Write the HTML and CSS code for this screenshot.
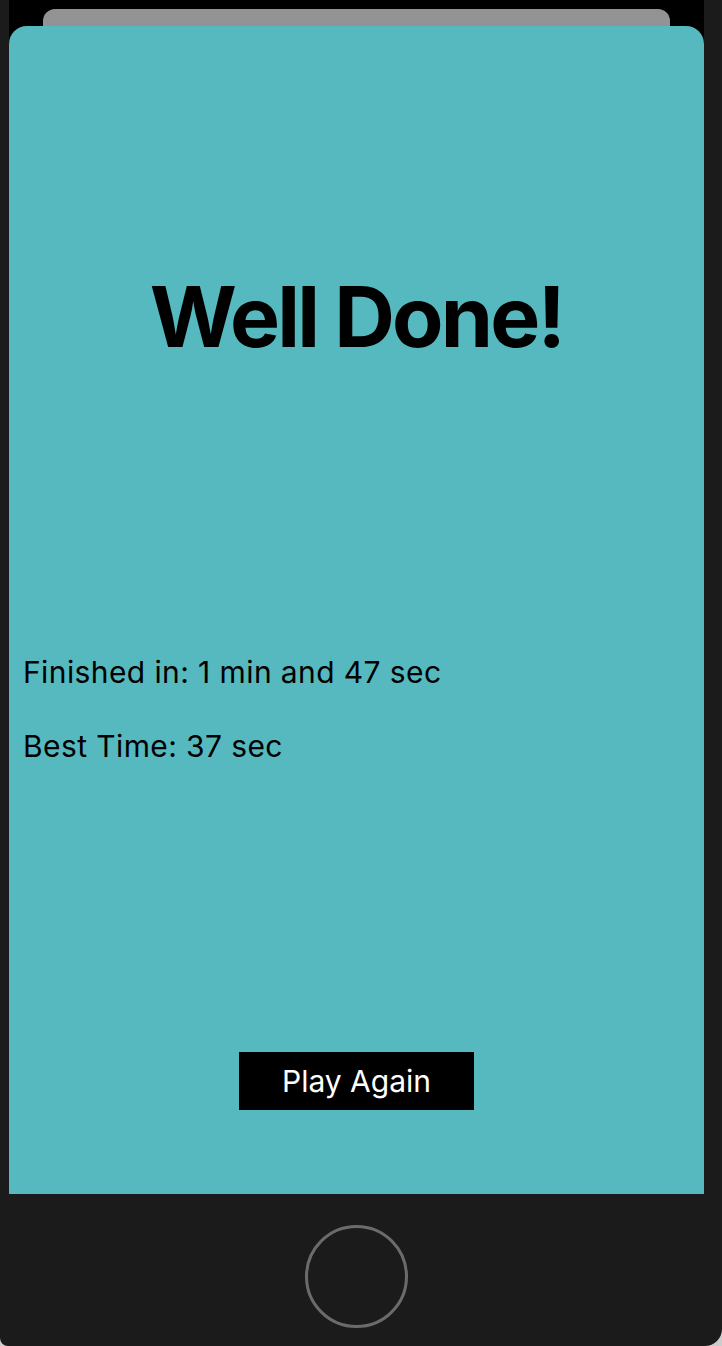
FILE: index.html
```html
<!DOCTYPE html>
<html lang="en">
<head>
<meta charset="utf-8">
<title>Well Done</title>
<link rel="stylesheet" href="styles.css">
</head>
<body>
<div class="phone">
  <div class="screen">
    <div class="sheet-back"></div>
    <div class="card">
      <h1 class="title">Well Done!</h1>
      <div class="stats">
        <p class="stat">Finished in: 1 min and 47 sec</p>
        <p class="stat">Best Time: 37 sec</p>
      </div>
      <div class="actions">
        <button class="play-btn" type="button">Play Again</button>
      </div>
    </div>
  </div>
  <div class="bezel">
    <div class="home-btn"></div>
  </div>
</div>
</body>
</html>
```

FILE: styles.css
```css
html, body {
  margin: 0;
  padding: 0;
}
body {
  background: #cdcdcd;
  width: 722px;
  height: 1346px;
  overflow: hidden;
  font-family: "Inter", "Roboto", "Liberation Sans", sans-serif;
}
.phone {
  width: 722px;
  height: 1346px;
  background: #1b1b1b;
  border-radius: 0 0 17px 8px;
  display: flex;
  flex-direction: column;
  box-sizing: border-box;
  padding-left: 9px;
  padding-right: 18px;
}
.screen {
  background: #000;
  padding-top: 9px;
  display: flex;
  flex-direction: column;
}
.sheet-back {
  height: 17px;
  margin: 0 34px;
  background: #939393;
  border-radius: 12px 12px 0 0;
}
.card {
  height: 1168px;
  background: #55b9bf;
  border-radius: 18px 18px 0 0;
  display: flex;
  flex-direction: column;
  box-sizing: border-box;
  padding-top: 241px;
}
.title {
  margin: 0;
  font-size: 84px;
  line-height: 100px;
  font-weight: 700;
  text-align: center;
  color: #000;
  letter-spacing: -2.8px;
}
.stats {
  margin-top: 287px;
  padding-left: 14px;
  display: flex;
  flex-direction: column;
  gap: 38px;
}
.stat {
  margin: 0;
  font-size: 30px;
  line-height: 36px;
  color: #000;
  letter-spacing: 0.4px;
}
.actions {
  margin-top: 288px;
  display: flex;
  justify-content: center;
}
.play-btn {
  width: 235px;
  height: 58px;
  background: #000;
  color: #fff;
  border: 0;
  border-radius: 0;
  padding: 0;
  font-family: inherit;
  font-size: 30px;
  line-height: 36px;
}
.bezel {
  flex: 1;
  display: flex;
  justify-content: center;
  padding-top: 31px;
}
.home-btn {
  width: 97px;
  height: 97px;
  border: 3.5px solid #6b6b6b;
  border-radius: 50%;
}
```
